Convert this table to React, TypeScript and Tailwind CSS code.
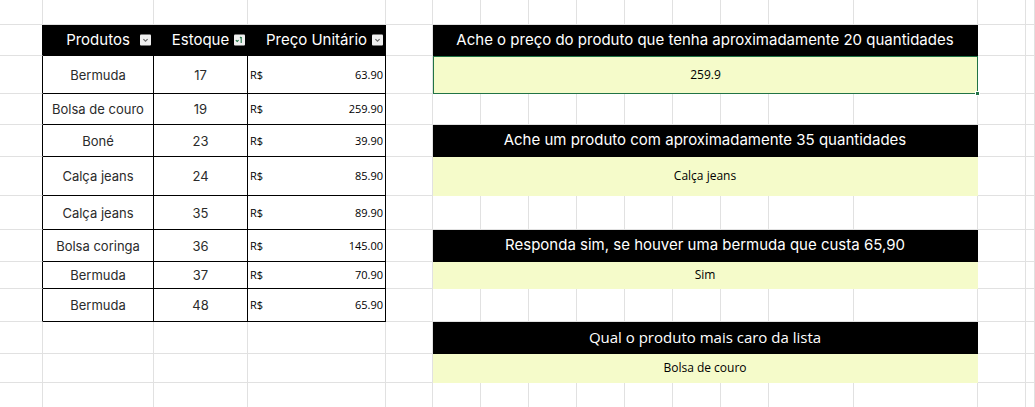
import { Fragment } from "react";

type Produto = { nome: string; estoque: number; preco: string };

type Bloco = { tipo: "pergunta"; texto: string; calibri?: boolean } | { tipo: "resposta"; texto: string; selecionada?: boolean };

const PRODUTOS: Produto[] = [
  { nome: "Bermuda", estoque: 17, preco: "63.90" },
  { nome: "Bolsa de couro", estoque: 19, preco: "259.90" },
  { nome: "Boné", estoque: 23, preco: "39.90" },
  { nome: "Calça jeans", estoque: 24, preco: "85.90" },
  { nome: "Calça jeans", estoque: 35, preco: "89.90" },
  { nome: "Bolsa coringa", estoque: 36, preco: "145.00" },
  { nome: "Bermuda", estoque: 37, preco: "70.90" },
  { nome: "Bermuda", estoque: 48, preco: "65.90" },
];

// linha da planilha -> bloco da direita (colunas F:N mescladas)
const BLOCOS: Record<number, Bloco> = {
  1: { tipo: "pergunta", texto: "Ache o preço do produto que tenha aproximadamente 20 quantidades" },
  2: { tipo: "resposta", texto: "259.9", selecionada: true },
  4: { tipo: "pergunta", texto: "Ache um produto com aproximadamente 35 quantidades" },
  5: { tipo: "resposta", texto: "Calça jeans" },
  7: { tipo: "pergunta", texto: "Responda sim, se houver uma bermuda que custa 65,90" },
  8: { tipo: "resposta", texto: "Sim" },
  10: { tipo: "pergunta", texto: "Qual o produto mais caro da lista", calibri: true },
  11: { tipo: "resposta", texto: "Bolsa de couro" },
};

const GRID_LINE = "border-r border-b border-[#e1e1e1]";
const TOTAL_ROWS = 13;

function FilterButton({ sorted = false }: { sorted?: boolean }) {
  return (
    <span className="absolute right-[2px] top-1/2 flex h-[11px] w-[11px] -translate-y-1/2 items-center justify-center rounded-[1px] bg-[#f0f0f0]">
      <svg viewBox="0 0 11 11" className="h-[11px] w-[11px]" fill="none">
        {sorted ? (
          <>
            <path d="M1.8 5.6l1.4 1.4 1.4-1.4" stroke="#217346" strokeWidth="1.1" />
            <path d="M7.2 2.5v6" stroke="#217346" strokeWidth="1.1" />
            <path d="M6 3.7l1.2-1.2" stroke="#217346" strokeWidth="1.1" />
          </>
        ) : (
          <path d="M3.4 4.6l2.1 2.1 2.1-2.1" stroke="#6b6b6b" strokeWidth="1.2" />
        )}
      </svg>
    </span>
  );
}

function EmptyCells({ count }: { count: number }) {
  return (
    <>
      {Array.from({ length: count }, (_, index) => (
        <div key={index} className={GRID_LINE} />
      ))}
    </>
  );
}

function TableCells({ row }: { row: number }) {
  if (row === 1) {
    return (
      <>
        <div className="relative flex items-center justify-center border-r border-b border-black bg-black text-[15px] text-white">
          Produtos
          <FilterButton />
        </div>
        <div className="relative flex items-center justify-center border-r border-b border-black bg-black text-[15px] text-white">
          Estoque
          <FilterButton sorted />
        </div>
        <div className="relative flex items-center justify-center border-r border-b border-black bg-black text-[15px] text-white">
          Preço Unitário
          <FilterButton />
        </div>
      </>
    );
  }

  const produto = PRODUTOS[row - 2];
  if (!produto) {
    return <EmptyCells count={3} />;
  }

  return (
    <>
      <div className="flex items-center justify-center border-r border-b border-black pt-[2px] text-[13px] text-[#2b2b2b]">{produto.nome}</div>
      <div className="flex items-center justify-center border-r border-b border-black pt-[2px] text-[13px] text-[#2b2b2b]">{produto.estoque}</div>
      <div className="flex items-center justify-between border-r border-b border-black px-[2px] pt-[1px] font-['Open_Sans',sans-serif] text-[11px] text-black">
        <span>R$</span>
        <span>{produto.preco}</span>
      </div>
    </>
  );
}

function RightBlock({ row }: { row: number }) {
  const bloco = BLOCOS[row];
  if (!bloco) {
    return <EmptyCells count={9} />;
  }

  if (bloco.tipo === "pergunta") {
    return (
      <div
        className={`col-span-9 flex items-center justify-center border-r border-b border-black bg-black text-white ${
          bloco.calibri ? "font-['Open_Sans',sans-serif] text-[15px]" : "text-[15px]"
        }`}
      >
        {bloco.texto}
      </div>
    );
  }

  return (
    <div
      className={`relative col-span-9 flex items-center justify-center bg-[#f5fbca] font-['Open_Sans',sans-serif] text-[12px] text-black ${
        bloco.selecionada ? "border border-[#217346]" : "border-r border-b border-[#f5fbca]"
      }`}
    >
      {bloco.texto}
      {bloco.selecionada ? <span className="absolute -bottom-[3px] -right-[3px] h-[5px] w-[5px] border border-white bg-[#217346]" /> : null}
    </div>
  );
}

export default function App() {
  return (
    <div className="h-[407px] w-[1035px] overflow-hidden bg-white font-['Inter',sans-serif]">
      <div className="grid grid-cols-[43px_111px_94px_138px_47px_48px_48px_48px_48px_48px_48px_48px_85px_124px_48px_1fr] grid-rows-[25px_31px_38px_31px_32px_39px_34px_32px_27px_33px_32px_29px_30px]">
        {Array.from({ length: TOTAL_ROWS }, (_, row) => (
          <Fragment key={row}>
            <div className={`${GRID_LINE} ${row >= 1 && row <= 9 ? "border-r-black" : ""}`} />
            <TableCells row={row} />
            <div className={GRID_LINE} />
            <RightBlock row={row} />
            <div className={GRID_LINE} />
            <div className={GRID_LINE} />
          </Fragment>
        ))}
      </div>
    </div>
  );
}
